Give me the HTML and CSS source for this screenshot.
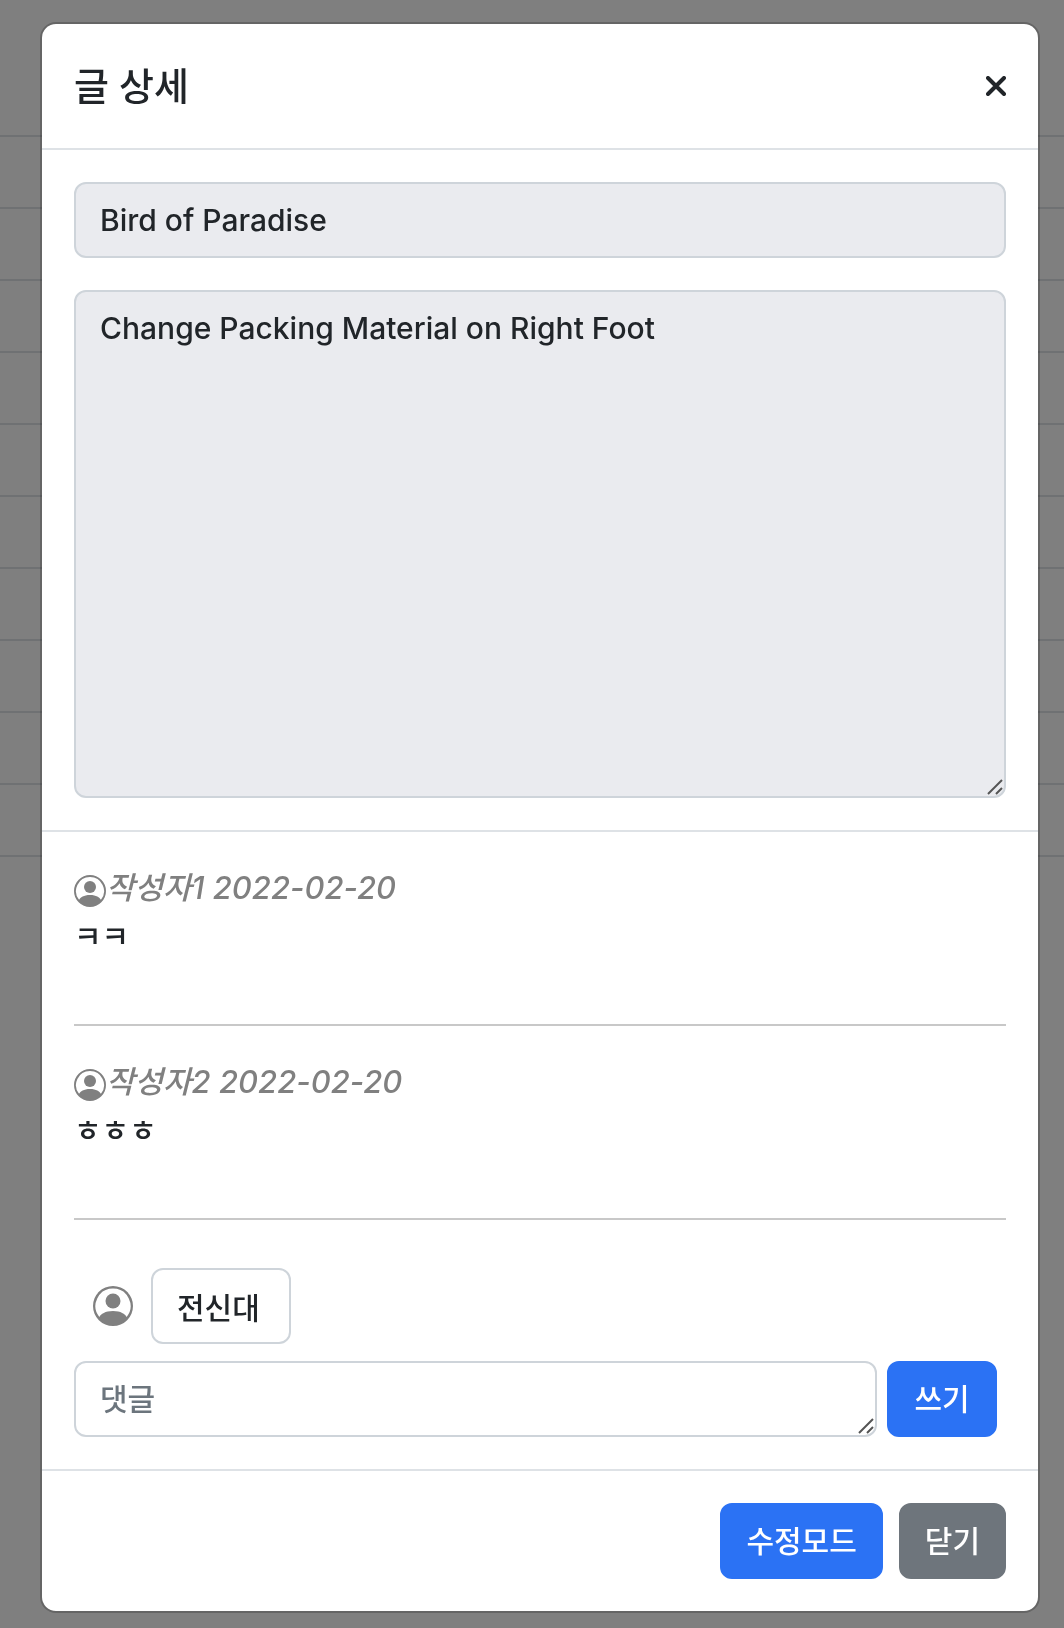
FILE: index.html
```html
<!DOCTYPE html>
<html lang="ko">
<head>
<meta charset="utf-8">
<meta name="viewport" content="width=device-width, initial-scale=1">
<title>글 상세</title>
<link rel="stylesheet" href="styles.css">
</head>
<body>
<svg class="symbols" aria-hidden="true">
  <symbol id="person" viewBox="0 0 16 16">
    <path d="M11 6a3 3 0 1 1-6 0 3 3 0 0 1 6 0z"/>
    <path fill-rule="evenodd" d="M0 8a8 8 0 1 1 16 0A8 8 0 0 1 0 8zm8-7a7 7 0 0 0-5.468 11.37C3.242 11.226 4.805 10 8 10s4.757 1.225 5.468 2.37A7 7 0 0 0 8 1z"/>
  </symbol>
  <symbol id="grip" viewBox="0 0 16 16">
    <path d="M1 15 15 1M9 15l6-6"/>
  </symbol>
</svg>

<div class="board" aria-hidden="true">
  <div class="board-row board-head"></div>
  <div class="board-row"></div>
  <div class="board-row"></div>
  <div class="board-row"></div>
  <div class="board-row"></div>
  <div class="board-row"></div>
  <div class="board-row"></div>
  <div class="board-row"></div>
  <div class="board-row"></div>
  <div class="board-row"></div>
  <div class="board-row"></div>
</div>
<div class="backdrop"></div>

<div class="modal" role="dialog" aria-modal="true" aria-labelledby="modal-title">
  <header class="modal-header">
    <h1 class="modal-title" id="modal-title">글 상세</h1>
    <button class="close" type="button" aria-label="닫기">
      <svg viewBox="0 0 20 20"><path d="M2 2l16 16M18 2 2 18"/></svg>
    </button>
  </header>

  <section class="post">
    <input class="field" type="text" value="Bird of Paradise" aria-label="제목" readonly>
    <div class="area">
      <textarea class="field field-content" aria-label="내용" readonly>Change Packing Material on Right Foot</textarea>
      <svg class="grip" aria-hidden="true"><use href="#grip"/></svg>
    </div>
  </section>

  <section class="comments">
    <article class="comment">
      <div class="comment-meta"><svg class="avatar"><use href="#person"/></svg><em>작성자1 2022-02-20</em></div>
      <p class="comment-text">ㅋㅋ</p>
    </article>
    <article class="comment">
      <div class="comment-meta"><svg class="avatar"><use href="#person"/></svg><em>작성자2 2022-02-20</em></div>
      <p class="comment-text">ㅎㅎㅎ</p>
    </article>

    <form class="write">
      <div class="writer">
        <svg class="avatar avatar-large"><use href="#person"/></svg>
        <input class="field field-name" type="text" value="전신대" aria-label="작성자">
      </div>
      <div class="write-row">
        <div class="area area-comment">
          <textarea class="field field-comment" rows="1" placeholder="댓글" aria-label="댓글"></textarea>
          <svg class="grip" aria-hidden="true"><use href="#grip"/></svg>
        </div>
        <button class="btn btn-primary btn-write" type="button">쓰기</button>
      </div>
    </form>
  </section>

  <footer class="modal-footer">
    <button class="btn btn-primary" type="button">수정모드</button>
    <button class="btn btn-secondary" type="button">닫기</button>
  </footer>
</div>
</body>
</html>
```
FILE: styles.css
```css
* {
  box-sizing: border-box;
}

body {
  margin: 0;
  background: #fff;
  color: #212529;
  font-family: Inter, "Noto Sans CJK KR", sans-serif;
  font-size: 30px;
  font-weight: 500;
  line-height: 48px;
}

.symbols {
  display: none;
}

/* Board behind the dialog */
.board {
  position: absolute;
  top: 0;
  left: 0;
  right: 0;
}

.board-row {
  height: 72px;
  border-bottom: 2px solid #dee2e6;
}

.board-head {
  height: 137px;
}

.backdrop {
  position: fixed;
  inset: 0;
  background: rgba(0, 0, 0, 0.5);
}

/* Dialog */
.modal {
  position: relative;
  margin: 22px 24px 15px 40px;
  border: 2px solid rgba(0, 0, 0, 0.2);
  border-radius: 16px;
  background: #fff;
  background-clip: padding-box;
}

.modal-header {
  display: flex;
  align-items: center;
  justify-content: space-between;
  padding: 32px;
  border-bottom: 2px solid #dee2e6;
}

.modal-title {
  margin: 0;
  font-size: 38px;
  font-weight: 500;
  line-height: 60px;
}

.close {
  display: flex;
  padding: 0;
  border: 0;
  background: none;
}

.close svg {
  width: 20px;
  height: 20px;
  fill: none;
  stroke: #212529;
  stroke-width: 4;
  stroke-linecap: round;
}

.post {
  display: flex;
  flex-direction: column;
  gap: 32px;
  padding: 32px;
  border-bottom: 2px solid #dee2e6;
}

/* Fields */
.field {
  display: block;
  width: 100%;
  height: 76px;
  margin: 0;
  padding: 12px 24px;
  border: 2px solid #ced4da;
  border-radius: 12px;
  background: #fff;
  color: inherit;
  font: inherit;
  resize: none;
  overflow: hidden;
}

.field:read-only {
  background: #eaebef;
}

.field::placeholder {
  color: #6c757d;
  opacity: 1;
}

.field-content {
  height: 508px;
}

.area {
  position: relative;
}

.grip {
  position: absolute;
  right: 3px;
  bottom: 3px;
  width: 16px;
  height: 16px;
  fill: none;
  stroke: #555;
  stroke-width: 2;
  pointer-events: none;
}

/* Comments */
.comments {
  padding: 32px;
  border-bottom: 2px solid #dee2e6;
}

.comment {
  margin-bottom: 32px;
  padding-bottom: 64px;
  border-bottom: 2px solid #c8c8c8;
}

.comment-meta {
  display: flex;
  align-items: center;
  color: #808080;
  font-size: 31px;
}

.comment-meta .avatar {
  height: 38px;
  padding-top: 6px;
}

.comment-text {
  margin: 0;
}

.avatar {
  flex: none;
  width: 32px;
  height: 32px;
  fill: #808080;
}

.avatar-large {
  width: 40px;
  height: 40px;
}

.write {
  display: flex;
  flex-direction: column;
  gap: 17px;
  padding-top: 16px;
}

.writer {
  display: flex;
  align-items: center;
  gap: 18px;
  padding-left: 19px;
}

.field-name {
  width: 140px;
}

.write-row {
  display: flex;
  gap: 10px;
  padding-right: 9px;
}

.area-comment {
  flex: 1;
}

/* Buttons */
.btn {
  height: 76px;
  padding: 12px 24px;
  border: 2px solid transparent;
  border-radius: 12px;
  color: #fff;
  font: inherit;
  cursor: pointer;
}

.btn-primary {
  border-color: #2b72f4;
  background: #2b72f4;
}

.btn-secondary {
  border-color: #6e757c;
  background: #6e757c;
}

.btn-write {
  min-width: 110px;
}

.modal-footer {
  display: flex;
  justify-content: flex-end;
  gap: 16px;
  padding: 32px;
}
```
